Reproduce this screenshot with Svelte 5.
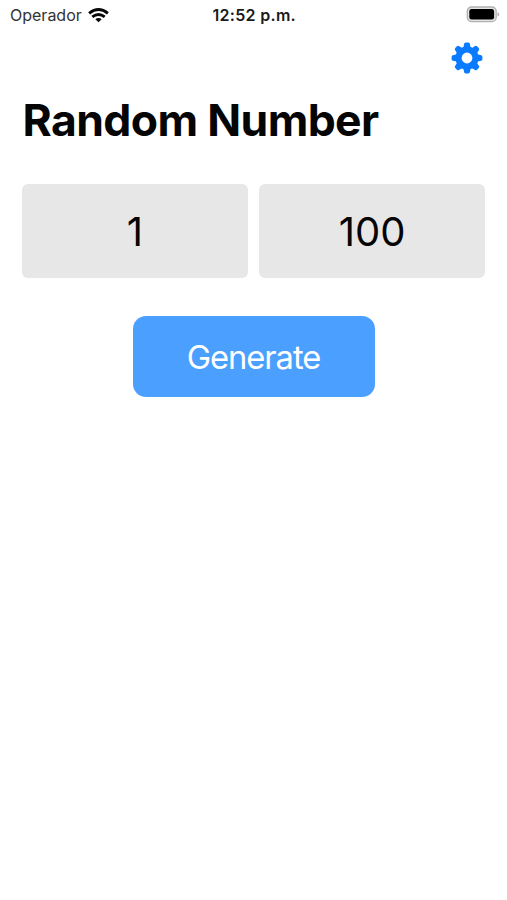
<script>
  let min = $state(1);
  let max = $state(100);
  const teeth = [0, 45, 90, 135, 180, 225, 270, 315];
</script>

<main>
  <header class="status">
    <div class="carrier">
      <span>Operador</span>
      <svg class="wifi" width="21" height="15" viewBox="0 0 21 15" aria-hidden="true">
        <g fill="none" stroke="#080808" stroke-width="2.9">
          <path d="M1.1 5.3Q10.5-2.1 19.9 5.3" />
          <path d="M4.3 8.9Q10.5 3.9 16.7 8.9" />
        </g>
        <path d="M7.3 11.2Q10.5 8.6 13.7 11.2L10.5 14.2Z" fill="#080808" />
      </svg>
    </div>
    <time>12:52 p.m.</time>
    <svg class="battery" width="34" height="17" viewBox="0 0 34 17" aria-hidden="true">
      <rect x="1.3" y="1" width="28.9" height="14.6" rx="4.2" fill="#e4e4e4" stroke="#b0b0b0" stroke-width="1.3" />
      <rect x="3.3" y="3" width="24.8" height="10.6" rx="2.3" fill="#000" />
      <path d="M31.6 6.2Q33.2 6.8 33.2 8.4T31.6 10.6Z" fill="#aaa" />
    </svg>
  </header>

  <nav>
    <button class="settings" aria-label="Settings">
      <svg width="32" height="32" viewBox="-16 -16 32 32">
        <g fill="#0a7bff">
          {#each teeth as angle}
            <path transform="rotate({angle})" d="M-4.2-9.5Q-3.2-11-3.1-13.2Q-2.9-15.4-1.2-15.4H1.2Q2.9-15.4 3.1-13.2Q3.2-11 4.2-9.5Z" />
          {/each}
        </g>
        <circle r="8.5" fill="none" stroke="#0a7bff" stroke-width="6.2" />
      </svg>
    </button>
  </nav>

  <h1>Random Number</h1>

  <div class="range">
    <div class="field"><span>{min}</span></div>
    <div class="field"><span>{max}</span></div>
  </div>

  <button class="generate"><span>Generate</span></button>
</main>

<style>
  :global(body) {
    margin: 0;
    background: #fff;
  }

  main {
    box-sizing: border-box;
    width: 507px;
    height: 900px;
    overflow: hidden;
    display: flex;
    flex-direction: column;
    background: #fff;
    color: #050505;
    font-family: Inter, 'Liberation Sans', sans-serif;
  }

  button {
    border: 0;
    padding: 0;
    margin: 0;
    background: none;
    font-family: inherit;
  }

  .status {
    display: grid;
    grid-template-columns: 1fr auto 1fr;
    align-items: center;
    height: 30px;
    padding: 0 7px 0 10px;
    box-sizing: border-box;
    font-size: 16px;
    line-height: 20px;
    flex: none;
  }

  .carrier {
    display: flex;
    align-items: center;
    gap: 6px;
    color: #333;
  }

  time {
    font-weight: 600;
    letter-spacing: 0.3px;
    margin-right: 1.5px;
    color: #1a1a1a;
  }

  svg {
    display: block;
  }

  .battery {
    justify-self: end;
    margin-bottom: 2px;
  }

  nav {
    display: flex;
    justify-content: flex-end;
    padding: 12px 24px 0 0;
  }

  h1 {
    margin: 19px 0 0 22.6px;
    font-size: 44.5px;
    line-height: 54px;
    font-weight: 700;
    letter-spacing: -0.62px;
    white-space: nowrap;
  }

  .range {
    display: flex;
    gap: 11px;
    margin: 37px 22px 0 22px;
  }

  .field {
    flex: 1;
    height: 93.5px;
    display: flex;
    align-items: center;
    justify-content: center;
    border-radius: 6px;
    background: #e7e7e7;
    font-size: 40px;
    line-height: 48px;
    padding-top: 2px;
    box-sizing: border-box;
  }

  .generate {
    align-self: center;
    width: 242.5px;
    height: 81px;
    margin: 38px 0 0 1px;
    border-radius: 13px;
    background: #4b9fff;
    color: #fff;
    font-size: 32.7px;
    line-height: 40px;
    font-weight: 400;
    letter-spacing: -1.05px;
    padding: 2px 1px 0 0;
  }
</style>
